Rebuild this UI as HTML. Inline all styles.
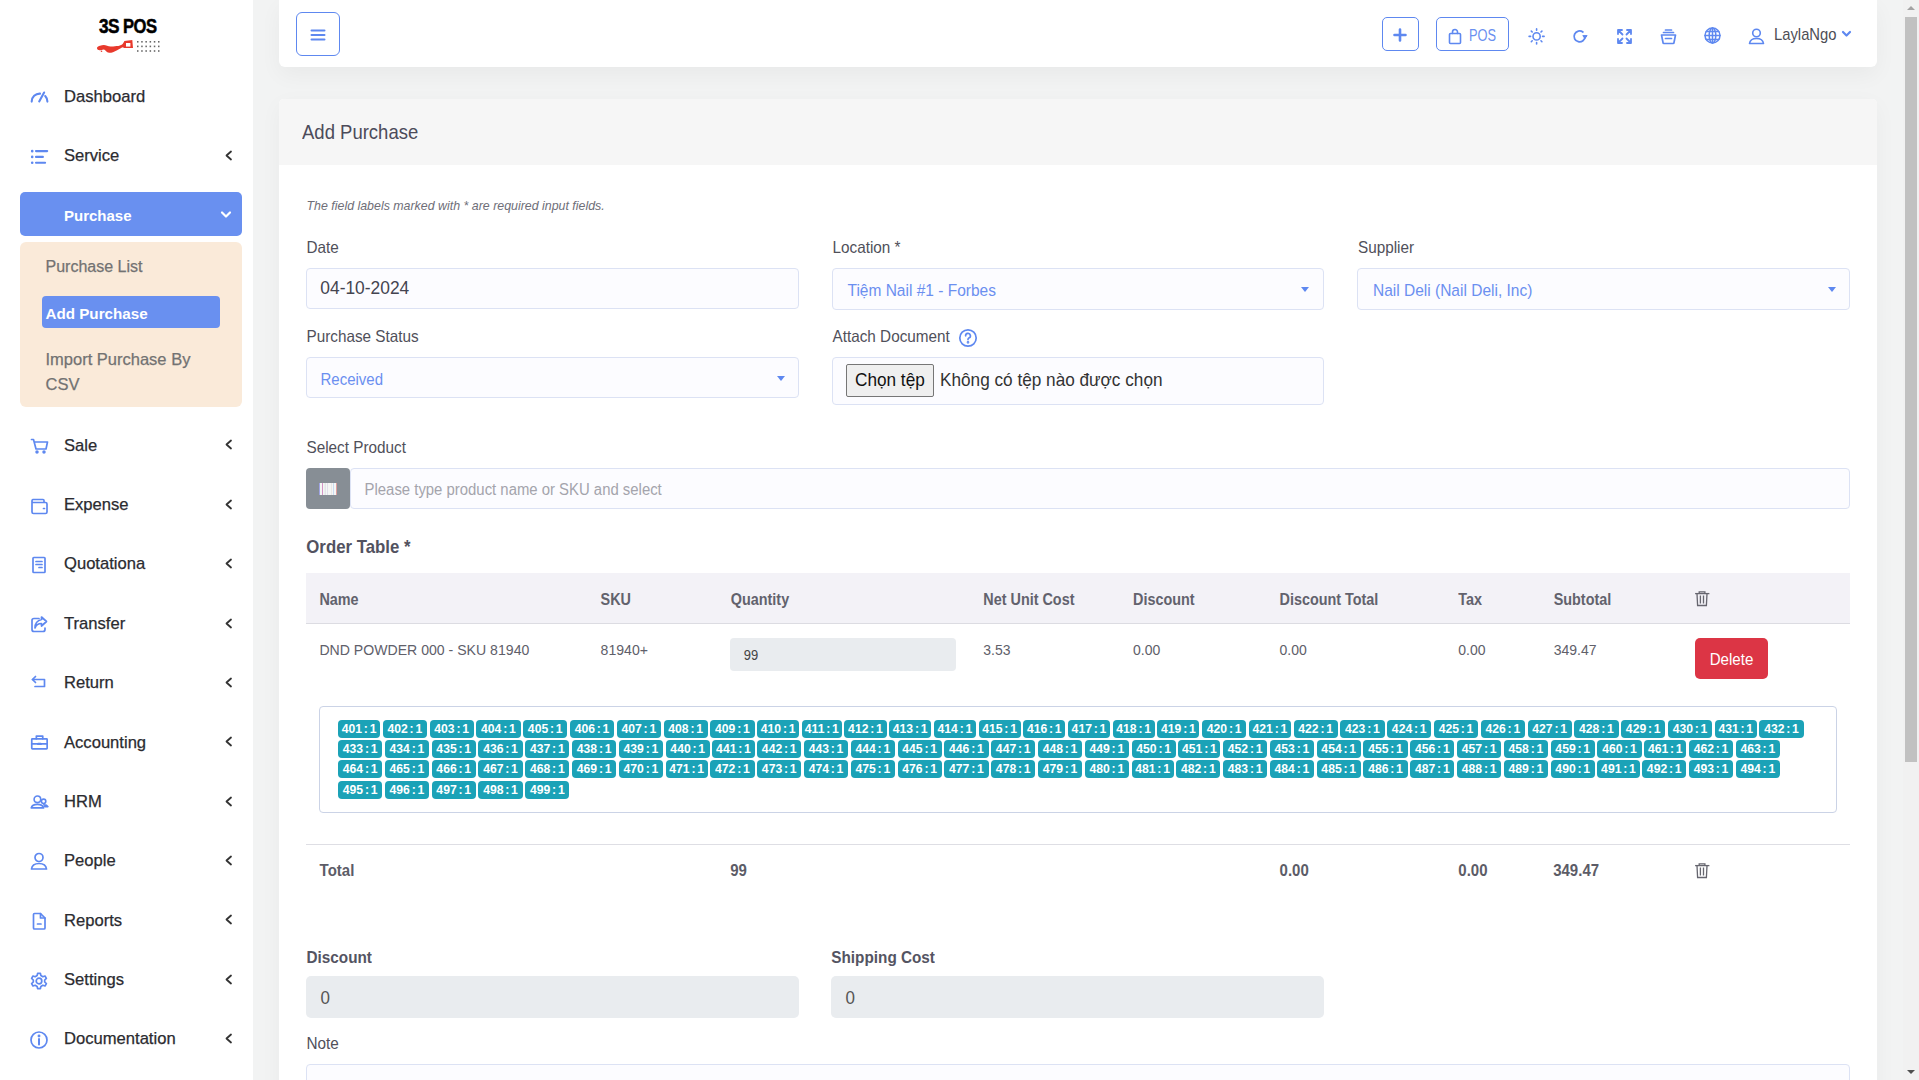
<!DOCTYPE html>
<html><head><meta charset="utf-8">
<style>
*{box-sizing:border-box;margin:0;padding:0}
html,body{width:1919px;height:1080px;overflow:hidden}
body{position:relative;background:#f2f3f3;font-family:"Liberation Sans",sans-serif;color:#333}
.a{position:absolute;white-space:nowrap}
div.sb{-webkit-text-stroke:0.25px currentColor}
.bd span{display:inline-block;transform:scaleY(1.12);transform-origin:0 12px}
.bd{position:absolute;height:17.6px;background:#1ba2b7;color:#fff;font-size:12.2px;font-weight:700;border-radius:4px;text-align:center;line-height:17.6px;padding-top:1.4px;white-space:nowrap;word-spacing:-1.6px}
</style></head><body>
<div class="a" style="left:0px;top:0px;width:253px;height:1080px;background:#fff"></div>
<div class="a sb" style="left:99.4px;top:16.07px;font-size:20px;line-height:20px;font-weight:700;color:#000;font-style:normal;letter-spacing:-0.6px;-webkit-text-stroke:0.5px #000;transform:scaleX(0.86);transform-origin:0 0">3S</div>
<div class="a sb" style="left:123.1px;top:16.07px;font-size:20px;line-height:20px;font-weight:700;color:#000;font-style:normal;letter-spacing:-0.6px;-webkit-text-stroke:0.5px #000;transform:scaleX(0.83);transform-origin:0 0">POS</div>
<svg class="a" style="left:96px;top:39px" width="40" height="15" viewBox="0 0 40 15"><path d="M0.9 9 C1.5 7.5 2.7 6.9 4 6.7 C5.5 6.4 6.5 6.1 7.8 6.1 C10 6.3 12.5 7.8 15 7.6 C18 7.3 20 6.9 22.4 6.9 C24.5 6.6 26 5.5 26.8 4.7 L28.2 2.5 L28.2 2.1 L36.3 1 L37 9 L28 9 C27.5 8.6 27 8.4 26.8 8.3 C25 9 23.5 10 22.4 10.5 C20.5 11.5 19.5 12 18 12.7 C16.5 13.5 15.5 13.8 14.4 13.8 C12.5 13.8 11.5 13.2 10.7 12.7 C9.5 11.8 8.8 10.8 7.8 10.5 C6 10.5 4.5 11.4 3.4 11.3 C2.2 11.2 1.2 10.5 0.9 9 Z" fill="#e8392c"/><circle cx="5.5" cy="12.3" r="0.8" fill="#e8392c"/><rect x="30" y="4" width="4.4" height="3.6" fill="#fff"/></svg>
<svg class="a" style="left:137px;top:41px" width="24" height="13" viewBox="0 0 24 13"><rect x="0.0" y="0.0" width="1.5" height="1.6" fill="#666"/><rect x="0.0" y="4.6" width="1.5" height="1.6" fill="#666"/><rect x="0.0" y="9.2" width="1.5" height="1.6" fill="#666"/><rect x="4.2" y="0.0" width="1.5" height="1.6" fill="#666"/><rect x="4.2" y="4.6" width="1.5" height="1.6" fill="#666"/><rect x="4.2" y="9.2" width="1.5" height="1.6" fill="#666"/><rect x="8.4" y="0.0" width="1.5" height="1.6" fill="#666"/><rect x="8.4" y="4.6" width="1.5" height="1.6" fill="#666"/><rect x="8.4" y="9.2" width="1.5" height="1.6" fill="#666"/><rect x="12.600000000000001" y="0.0" width="1.5" height="1.6" fill="#666"/><rect x="12.600000000000001" y="4.6" width="1.5" height="1.6" fill="#666"/><rect x="12.600000000000001" y="9.2" width="1.5" height="1.6" fill="#666"/><rect x="16.8" y="0.0" width="1.5" height="1.6" fill="#666"/><rect x="16.8" y="4.6" width="1.5" height="1.6" fill="#666"/><rect x="16.8" y="9.2" width="1.5" height="1.6" fill="#666"/><rect x="21.0" y="0.0" width="1.5" height="1.6" fill="#666"/><rect x="21.0" y="4.6" width="1.5" height="1.6" fill="#666"/><rect x="21.0" y="9.2" width="1.5" height="1.6" fill="#666"/></svg>
<div class="a sb" style="left:64px;top:88.95px;font-size:16.6px;line-height:16.6px;font-weight:400;color:#2b2b30;font-style:normal;">Dashboard</div>
<div class="a sb" style="left:64px;top:148.35px;font-size:16.6px;line-height:16.6px;font-weight:400;color:#2b2b30;font-style:normal;">Service</div>
<svg class="a" style="left:223.5px;top:150.0px;" width="9" height="11" viewBox="0 0 9 11" fill="none" stroke="#333" stroke-width="1.8" stroke-linecap="round" stroke-linejoin="round"><path d="M7 1.5 L2.5 5.5 L7 9.5"/></svg>
<div class="a sb" style="left:64px;top:437.75px;font-size:16.6px;line-height:16.6px;font-weight:400;color:#2b2b30;font-style:normal;">Sale</div>
<svg class="a" style="left:223.5px;top:439.4px;" width="9" height="11" viewBox="0 0 9 11" fill="none" stroke="#333" stroke-width="1.8" stroke-linecap="round" stroke-linejoin="round"><path d="M7 1.5 L2.5 5.5 L7 9.5"/></svg>
<div class="a sb" style="left:64px;top:497.25px;font-size:16.6px;line-height:16.6px;font-weight:400;color:#2b2b30;font-style:normal;">Expense</div>
<svg class="a" style="left:223.5px;top:498.9px;" width="9" height="11" viewBox="0 0 9 11" fill="none" stroke="#333" stroke-width="1.8" stroke-linecap="round" stroke-linejoin="round"><path d="M7 1.5 L2.5 5.5 L7 9.5"/></svg>
<div class="a sb" style="left:64px;top:556.45px;font-size:16.6px;line-height:16.6px;font-weight:400;color:#2b2b30;font-style:normal;">Quotationa</div>
<svg class="a" style="left:223.5px;top:558.1px;" width="9" height="11" viewBox="0 0 9 11" fill="none" stroke="#333" stroke-width="1.8" stroke-linecap="round" stroke-linejoin="round"><path d="M7 1.5 L2.5 5.5 L7 9.5"/></svg>
<div class="a sb" style="left:64px;top:616.15px;font-size:16.6px;line-height:16.6px;font-weight:400;color:#2b2b30;font-style:normal;">Transfer</div>
<svg class="a" style="left:223.5px;top:617.8px;" width="9" height="11" viewBox="0 0 9 11" fill="none" stroke="#333" stroke-width="1.8" stroke-linecap="round" stroke-linejoin="round"><path d="M7 1.5 L2.5 5.5 L7 9.5"/></svg>
<div class="a sb" style="left:64px;top:675.05px;font-size:16.6px;line-height:16.6px;font-weight:400;color:#2b2b30;font-style:normal;">Return</div>
<svg class="a" style="left:223.5px;top:676.6999999999999px;" width="9" height="11" viewBox="0 0 9 11" fill="none" stroke="#333" stroke-width="1.8" stroke-linecap="round" stroke-linejoin="round"><path d="M7 1.5 L2.5 5.5 L7 9.5"/></svg>
<div class="a sb" style="left:64px;top:734.75px;font-size:16.6px;line-height:16.6px;font-weight:400;color:#2b2b30;font-style:normal;">Accounting</div>
<svg class="a" style="left:223.5px;top:736.4px;" width="9" height="11" viewBox="0 0 9 11" fill="none" stroke="#333" stroke-width="1.8" stroke-linecap="round" stroke-linejoin="round"><path d="M7 1.5 L2.5 5.5 L7 9.5"/></svg>
<div class="a sb" style="left:64px;top:793.95px;font-size:16.6px;line-height:16.6px;font-weight:400;color:#2b2b30;font-style:normal;">HRM</div>
<svg class="a" style="left:223.5px;top:795.6px;" width="9" height="11" viewBox="0 0 9 11" fill="none" stroke="#333" stroke-width="1.8" stroke-linecap="round" stroke-linejoin="round"><path d="M7 1.5 L2.5 5.5 L7 9.5"/></svg>
<div class="a sb" style="left:64px;top:853.25px;font-size:16.6px;line-height:16.6px;font-weight:400;color:#2b2b30;font-style:normal;">People</div>
<svg class="a" style="left:223.5px;top:854.9px;" width="9" height="11" viewBox="0 0 9 11" fill="none" stroke="#333" stroke-width="1.8" stroke-linecap="round" stroke-linejoin="round"><path d="M7 1.5 L2.5 5.5 L7 9.5"/></svg>
<div class="a sb" style="left:64px;top:912.75px;font-size:16.6px;line-height:16.6px;font-weight:400;color:#2b2b30;font-style:normal;">Reports</div>
<svg class="a" style="left:223.5px;top:914.4px;" width="9" height="11" viewBox="0 0 9 11" fill="none" stroke="#333" stroke-width="1.8" stroke-linecap="round" stroke-linejoin="round"><path d="M7 1.5 L2.5 5.5 L7 9.5"/></svg>
<div class="a sb" style="left:64px;top:971.95px;font-size:16.6px;line-height:16.6px;font-weight:400;color:#2b2b30;font-style:normal;">Settings</div>
<svg class="a" style="left:223.5px;top:973.6px;" width="9" height="11" viewBox="0 0 9 11" fill="none" stroke="#333" stroke-width="1.8" stroke-linecap="round" stroke-linejoin="round"><path d="M7 1.5 L2.5 5.5 L7 9.5"/></svg>
<div class="a sb" style="left:64px;top:1031.05px;font-size:16.6px;line-height:16.6px;font-weight:400;color:#2b2b30;font-style:normal;">Documentation</div>
<svg class="a" style="left:223.5px;top:1032.7px;" width="9" height="11" viewBox="0 0 9 11" fill="none" stroke="#333" stroke-width="1.8" stroke-linecap="round" stroke-linejoin="round"><path d="M7 1.5 L2.5 5.5 L7 9.5"/></svg>
<svg class="a" style="left:29px;top:88px;" width="20" height="20" viewBox="0 0 20 20" fill="none" stroke="#5e88f0" stroke-width="2.1" stroke-linecap="round" stroke-linejoin="round"><path d="M2.7 13.6 A8 8 0 0 1 11 5.6"/><path d="M16.2 8 A8 8 0 0 1 18.4 13.6"/><path d="M10.2 13.4 L15.1 4.5"/></svg>
<svg class="a" style="left:29px;top:146.5px;" width="20" height="20" viewBox="0 0 20 20" fill="none" stroke="#5e88f0" stroke-width="2.1" stroke-linecap="round" stroke-linejoin="round"><path d="M7 4.1 H18.2 M7 9.9 H13.9 M7 15.7 H16.1"/><path d="M3.2 4.1 V4.2 M3.2 9.9 V10 M3.2 15.7 V15.8" stroke-width="2.6"/></svg>
<svg class="a" style="left:29px;top:436px;" width="20" height="20" viewBox="0 0 20 20" fill="none" stroke="#5e88f0" stroke-width="1.7" stroke-linecap="round" stroke-linejoin="round"><path d="M2.5 3.5 H4.5 L7 13 H17 L18.5 6 H5.5"/><circle cx="8" cy="16" r="0.9" fill="#5e88f0"/><circle cx="15" cy="16" r="0.9" fill="#5e88f0"/></svg>
<svg class="a" style="left:29px;top:495.5px;" width="20" height="20" viewBox="0 0 20 20" fill="none" stroke="#5e88f0" stroke-width="1.7" stroke-linecap="round" stroke-linejoin="round"><path d="M15 6.5 V4.5 A1 1 0 0 0 14 3.5 H4 A1.5 1.5 0 0 0 3 5 V16 A1.5 1.5 0 0 0 4.5 17.5 H16.5 A1.5 1.5 0 0 0 18 16 V8 A1.5 1.5 0 0 0 16.5 6.5 H4"/><path d="M14.5 12.5 H15.5"/></svg>
<svg class="a" style="left:29px;top:554.5px;" width="20" height="20" viewBox="0 0 20 20" fill="none" stroke="#5e88f0" stroke-width="1.7" stroke-linecap="round" stroke-linejoin="round"><rect x="4" y="2.5" width="12" height="15" rx="0.8"/><path d="M7 6.5 H13 M7 9.5 H13 M10 12.5 H13"/></svg>
<svg class="a" style="left:29px;top:614px;" width="20" height="20" viewBox="0 0 20 20" fill="none" stroke="#5e88f0" stroke-width="1.7" stroke-linecap="round" stroke-linejoin="round"><path d="M10 4.5 H5 A2 2 0 0 0 3 6.5 V15.5 A2 2 0 0 0 5 17.5 H14 A2 2 0 0 0 16 15.5 V14"/><path d="M12.5 3 L17.5 7.5 L12.5 12 V9.5 C9 9.5 7 11 6 14 C6 10 8 6.5 12.5 5.5 Z"/></svg>
<svg class="a" style="left:29px;top:673px;" width="20" height="20" viewBox="0 0 20 20" fill="none" stroke="#5e88f0" stroke-width="1.7" stroke-linecap="round" stroke-linejoin="round"><path d="M6.5 9.5 L3.5 6.5 L6.5 3.5"/><path d="M3.5 6.5 H15.5 V13.5 H6"/></svg>
<svg class="a" style="left:29px;top:733px;" width="20" height="20" viewBox="0 0 20 20" fill="none" stroke="#5e88f0" stroke-width="1.7" stroke-linecap="round" stroke-linejoin="round"><rect x="2.75" y="5.85" width="15.4" height="10.1" rx="0.6"/><path d="M7.35 5.85 V3.05 H13.75 V5.85"/><path d="M2.75 10.9 H18.15"/><path d="M9.2 10.9 H11.7" stroke-width="2.4"/></svg>
<svg class="a" style="left:29px;top:792.5px;" width="20" height="20" viewBox="0 0 20 20" fill="none" stroke="#5e88f0" stroke-width="1.6" stroke-linecap="round" stroke-linejoin="round"><circle cx="8.4" cy="6.3" r="3.3"/><path d="M2.2 14.9 C2.8 12.6 5.2 11.4 8.4 11.4 C11.6 11.4 14 12.6 14.6 14.9 Z"/><circle cx="14.6" cy="8.3" r="2.2"/><path d="M14.8 11.9 C16.8 12 18.3 12.6 18.9 13.6 H15.6"/></svg>
<svg class="a" style="left:29px;top:851px;" width="20" height="20" viewBox="0 0 20 20" fill="none" stroke="#5e88f0" stroke-width="1.7" stroke-linecap="round" stroke-linejoin="round"><circle cx="10" cy="6.5" r="4"/><path d="M2.5 18 C3 14 6 12.5 10 12.5 C14 12.5 17 14 17.5 18 Z"/></svg>
<svg class="a" style="left:29px;top:910.5px;" width="20" height="20" viewBox="0 0 20 20" fill="none" stroke="#5e88f0" stroke-width="1.7" stroke-linecap="round" stroke-linejoin="round"><path d="M11.5 2.5 H5.5 A1 1 0 0 0 4.5 3.5 V17 A1 1 0 0 0 5.5 18 H15 A1 1 0 0 0 16 17 V7 Z"/><path d="M11.5 2.5 V7 H16"/><path d="M8.5 13 H12"/></svg>
<svg class="a" style="left:29px;top:970.5px;" width="20" height="20" viewBox="0 0 20 20" fill="none" stroke="#5e88f0" stroke-width="1.7" stroke-linecap="round" stroke-linejoin="round"><circle cx="10" cy="10" r="2.8"/><path d="M8.6 2.4 H11.4 L11.9 4.6 L13.8 5.7 L16 5 L17.4 7.4 L15.7 9 V11 L17.4 12.6 L16 15 L13.8 14.3 L11.9 15.4 L11.4 17.6 H8.6 L8.1 15.4 L6.2 14.3 L4 15 L2.6 12.6 L4.3 11 V9 L2.6 7.4 L4 5 L6.2 5.7 L8.1 4.6 Z"/></svg>
<svg class="a" style="left:29px;top:1029.5px;" width="20" height="20" viewBox="0 0 20 20" fill="none" stroke="#5e88f0" stroke-width="1.7" stroke-linecap="round" stroke-linejoin="round"><circle cx="10" cy="10" r="8"/><path d="M10 9 V14.5" stroke-width="2"/><circle cx="10" cy="6" r="0.6" fill="#5e88f0"/></svg>
<div class="a" style="left:20px;top:192px;width:222px;height:44px;background:#6990f0;border-radius:5px"></div>
<div class="a sb" style="left:64px;top:208.10px;font-size:15px;line-height:15px;font-weight:700;color:#fff;font-style:normal;;-webkit-text-stroke:0">Purchase</div>
<svg class="a" style="left:219px;top:209.2px;" width="14" height="12" viewBox="0 0 14 12" fill="none" stroke="#fff" stroke-width="2.2" stroke-linecap="round" stroke-linejoin="round"><path d="M3 3.5 L7 7.5 L11 3.5"/></svg>
<div class="a" style="left:20px;top:242px;width:222px;height:165px;background:#faead9;border-radius:6px"></div>
<div class="a sb" style="left:45.5px;top:259.46px;font-size:16px;line-height:16px;font-weight:400;color:#727272;font-style:normal;">Purchase List</div>
<div class="a" style="left:42px;top:296px;width:178px;height:32px;background:#6990f0;border-radius:4px"></div>
<div class="a sb" style="left:45.5px;top:305.83px;font-size:15.2px;line-height:15.2px;font-weight:700;color:#fff;font-style:normal;;-webkit-text-stroke:0">Add Purchase</div>
<div class="a sb" style="left:45.5px;top:351.13px;font-size:16.5px;line-height:16.5px;font-weight:400;color:#727272;font-style:normal;">Import Purchase By</div>
<div class="a sb" style="left:45.5px;top:375.53px;font-size:16.5px;line-height:16.5px;font-weight:400;color:#727272;font-style:normal;">CSV</div>
<div class="a" style="left:279px;top:0px;width:1598px;height:67px;background:#fff;border-radius:0 0 6px 6px;box-shadow:0 8px 22px rgba(0,0,0,.045)"></div>
<div class="a" style="left:296px;top:12px;width:44px;height:44px;border:1px solid #5e88f0;border-radius:6px"></div>
<svg class="a" style="left:309px;top:27px;" width="18" height="16" viewBox="0 0 18 16" fill="none" stroke="#5e88f0" stroke-width="2" stroke-linecap="round" stroke-linejoin="round"><path d="M2.5 3.5 H15.5 M2.5 8 H15.5 M2.5 12.5 H15.5"/></svg>
<div class="a" style="left:1382px;top:17px;width:37px;height:34px;border:1px solid #5e88f0;border-radius:5px"></div>
<svg class="a" style="left:1392px;top:27px;" width="16" height="16" viewBox="0 0 16 16" fill="none" stroke="#5e88f0" stroke-width="2.6" stroke-linecap="round" stroke-linejoin="round"><path d="M8 2.5 V13.5 M2.5 8 H13.5"/></svg>
<div class="a" style="left:1436px;top:17px;width:73px;height:34px;border:1px solid #5e88f0;border-radius:5px"></div>
<svg class="a" style="left:1447px;top:28px;" width="16" height="17" viewBox="0 0 16 17" fill="none" stroke="#5e88f0" stroke-width="1.6" stroke-linecap="round" stroke-linejoin="round"><rect x="2.5" y="5.5" width="11" height="10" rx="1"/><path d="M5.5 5.5 V4 A2.5 2.5 0 0 1 10.5 4 V5.5"/></svg>
<div class="a" style="left:1469.3px;top:27.76px;font-size:16px;line-height:16px;font-weight:400;color:#6b8ff0;font-style:normal;transform:scaleX(0.8);transform-origin:0 0">POS</div>
<svg class="a" style="left:1527px;top:27px;" width="20" height="20" viewBox="0 0 20 20" fill="none" stroke="#5e88f0" stroke-width="1.6" stroke-linecap="round" stroke-linejoin="round"><circle cx="9.6" cy="9.4" r="3.6"/><path d="M9.6 1.9 V3.3 M9.6 15.5 V16.9 M2.1 9.4 H3.6 M15.6 9.4 H17.1 M4.3 4.1 L5.2 5 M14 13.8 L14.9 14.7 M4.3 14.7 L5.2 13.8 M14 5 L14.9 4.1"/></svg>
<svg class="a" style="left:1571px;top:27px;" width="19" height="19" viewBox="0 0 19 19" fill="none" stroke="#5e88f0" stroke-width="1.8" stroke-linecap="round" stroke-linejoin="round"><path d="M11.9 5 A5.5 5.5 0 1 0 14.1 9.6"/><path d="M12.2 8.6 L16.1 8.6 L14.15 11.3 Z" fill="#5e88f0" stroke-width="1"/></svg>
<svg class="a" style="left:1615px;top:27px;" width="19" height="19" viewBox="0 0 19 19" fill="none" stroke="#5e88f0" stroke-width="1.8" stroke-linecap="round" stroke-linejoin="round"><path d="M3 7 V3 H7 M3 3 L7.5 7.5 M16 7 V3 H12 M16 3 L11.5 7.5 M3 12 V16 H7 M3 16 L7.5 11.5 M16 12 V16 H12 M16 16 L11.5 11.5"/></svg>
<svg class="a" style="left:1659px;top:27px;" width="19" height="19" viewBox="0 0 19 19" fill="none" stroke="#5e88f0" stroke-width="1.7" stroke-linecap="round" stroke-linejoin="round"><path d="M2.5 8 H16.5 L15 15.5 A1 1 0 0 1 14 16.5 H5 A1 1 0 0 1 4 15.5 Z"/><path d="M4.5 5.5 H14.5 M6.5 3 H12.5 M6.5 11.5 H12.5"/></svg>
<svg class="a" style="left:1703px;top:26.2px;" width="19" height="19" viewBox="0 0 19 19" fill="none" stroke="#5e88f0" stroke-width="1.5" stroke-linecap="round" stroke-linejoin="round"><circle cx="9.5" cy="9.5" r="7.5"/><ellipse cx="9.5" cy="9.5" rx="3.3" ry="7.5"/><path d="M2 9.5 H17 M3.2 5.5 H15.8 M3.2 13.5 H15.8 M9.5 2 V17"/></svg>
<svg class="a" style="left:1747px;top:27px;" width="19" height="18" viewBox="0 0 19 18" fill="none" stroke="#5e88f0" stroke-width="1.6" stroke-linecap="round" stroke-linejoin="round"><circle cx="9.5" cy="6" r="3.8"/><path d="M2.5 16.5 C3 13 5.5 11.5 9.5 11.5 C13.5 11.5 16 13 16.5 16.5 Z"/></svg>
<div class="a" style="left:1774px;top:28.27px;font-size:14.8px;line-height:14.8px;font-weight:400;color:#4d4d55;font-style:normal;;transform:scaleY(1.09);transform-origin:0 12.53px">LaylaNgo</div>
<svg class="a" style="left:1840px;top:28px;" width="13" height="12" viewBox="0 0 13 12" fill="none" stroke="#5e88f0" stroke-width="2.2" stroke-linecap="round" stroke-linejoin="round"><path d="M3 4 L6.5 7.5 L10 4"/></svg>
<div class="a" style="left:279px;top:99px;width:1598px;height:1000px;background:#fff;border-radius:5px;box-shadow:0 6px 22px rgba(0,0,0,.04)"></div>
<div class="a" style="left:279px;top:99px;width:1598px;height:66px;background:#f6f6f6;border-radius:5px 5px 0 0"></div>
<div class="a" style="left:302px;top:124.44px;font-size:18.5px;line-height:18.5px;font-weight:400;color:#4c4b5a;font-style:normal;;transform:scaleY(1.09);transform-origin:0 15.66px">Add Purchase</div>
<div class="a" style="left:306.5px;top:199.80px;font-size:12.4px;line-height:12.4px;font-weight:400;color:#6e6e78;font-style:italic;;transform:scaleY(1.09);transform-origin:0 10.50px">The field labels marked with * are required input fields.</div>
<div class="a" style="left:306.5px;top:240.05px;font-size:15.3px;line-height:15.3px;font-weight:400;color:#50505a;font-style:normal;;transform:scaleY(1.09);transform-origin:0 12.95px">Date</div>
<div class="a" style="left:832.5px;top:240.35px;font-size:15.3px;line-height:15.3px;font-weight:400;color:#50505a;font-style:normal;;transform:scaleY(1.09);transform-origin:0 12.95px">Location *</div>
<div class="a" style="left:1358px;top:240.35px;font-size:15.3px;line-height:15.3px;font-weight:400;color:#50505a;font-style:normal;;transform:scaleY(1.09);transform-origin:0 12.95px">Supplier</div>
<div class="a" style="left:306px;top:268px;width:493px;height:41px;background:#fcfcff;border:1px solid #dce2f4;border-radius:4px"></div>
<div class="a" style="left:320.3px;top:280.27px;font-size:17.4px;line-height:17.4px;font-weight:400;color:#444450;font-style:normal;;transform:scaleY(1.09);transform-origin:0 14.73px">04-10-2024</div>
<div class="a" style="left:832px;top:268px;width:492px;height:42px;background:#fcfcff;border:1px solid #dce2f4;border-radius:4px"></div>
<div class="a" style="left:847.5px;top:282.68px;font-size:15.5px;line-height:15.5px;font-weight:400;color:#6b8ff0;font-style:normal;;transform:scaleY(1.09);transform-origin:0 13.12px">Tiệm Nail #1 - Forbes</div>
<div class="a" style="left:1301px;top:287px;width:0;height:0;border-left:4.5px solid transparent;border-right:4.5px solid transparent;border-top:5px solid #5e88f0"></div>
<div class="a" style="left:1357px;top:268px;width:493px;height:42px;background:#fcfcff;border:1px solid #dce2f4;border-radius:4px"></div>
<div class="a" style="left:1373px;top:282.68px;font-size:15.5px;line-height:15.5px;font-weight:400;color:#6b8ff0;font-style:normal;;transform:scaleY(1.09);transform-origin:0 13.12px">Nail Deli (Nail Deli, Inc)</div>
<div class="a" style="left:1828px;top:287px;width:0;height:0;border-left:4.5px solid transparent;border-right:4.5px solid transparent;border-top:5px solid #5e88f0"></div>
<div class="a" style="left:306.5px;top:329.05px;font-size:15.3px;line-height:15.3px;font-weight:400;color:#50505a;font-style:normal;;transform:scaleY(1.09);transform-origin:0 12.95px">Purchase Status</div>
<div class="a" style="left:832.5px;top:328.75px;font-size:15.3px;line-height:15.3px;font-weight:400;color:#50505a;font-style:normal;;transform:scaleY(1.09);transform-origin:0 12.95px">Attach Document</div>
<svg class="a" style="left:958px;top:328px;" width="20" height="20" viewBox="0 0 20 20" fill="none" stroke="#5e88f0" stroke-width="1.7" stroke-linecap="round" stroke-linejoin="round"><circle cx="10" cy="10" r="8.2"/><path d="M7.6 7.8 A2.4 2.4 0 1 1 10.8 10 C10.2 10.3 10 10.8 10 11.6"/><circle cx="10" cy="14.3" r="0.5" fill="#5e88f0"/></svg>
<div class="a" style="left:306px;top:357px;width:493px;height:41px;background:#fcfcff;border:1px solid #dce2f4;border-radius:4px"></div>
<div class="a" style="left:320.5px;top:371.80px;font-size:15px;line-height:15px;font-weight:400;color:#6b8ff0;font-style:normal;;transform:scaleY(1.09);transform-origin:0 12.70px">Received</div>
<div class="a" style="left:777px;top:376px;width:0;height:0;border-left:4.5px solid transparent;border-right:4.5px solid transparent;border-top:5px solid #5e88f0"></div>
<div class="a" style="left:832px;top:357px;width:492px;height:48px;background:#fcfcff;border:1px solid #dce2f4;border-radius:4px"></div>
<div class="a" style="left:846px;top:364px;width:88px;height:33px;background:#efefef;border:1px solid #767676;border-radius:2px"></div>
<div class="a" style="left:855px;top:372.14px;font-size:17.2px;line-height:17.2px;font-weight:400;color:#111;font-style:normal;;transform:scaleY(1.09);transform-origin:0 14.56px">Chọn tệp</div>
<div class="a" style="left:940px;top:372.14px;font-size:17.2px;line-height:17.2px;font-weight:400;color:#333;font-style:normal;;transform:scaleY(1.09);transform-origin:0 14.56px">Không có tệp nào được chọn</div>
<div class="a" style="left:306.5px;top:440.05px;font-size:15.3px;line-height:15.3px;font-weight:400;color:#50505a;font-style:normal;;transform:scaleY(1.09);transform-origin:0 12.95px">Select Product</div>
<div class="a" style="left:306px;top:468px;width:44px;height:41px;background:#878e95;border-radius:4px"></div>
<svg class="a" style="left:319px;top:483px" width="18" height="12" viewBox="0 0 18 12"><rect x="0" y="0" width="18" height="12" fill="#f4f6f4"/><rect x="0" y="0" width="0.8" height="12" fill="#8a90e0"/><rect x="3" y="0" width="0.9" height="12" fill="#d08ac0"/><rect x="5.8" y="0" width="0.6" height="12" fill="#c8d0d8"/><rect x="8" y="0" width="0.5" height="12" fill="#d0c8e0"/><rect x="12.5" y="0" width="0.5" height="12" fill="#e0d8d8"/><rect x="14" y="0" width="0.7" height="12" fill="#b8d0f0"/><rect x="17.2" y="0" width="0.8" height="12" fill="#d88888"/></svg>
<div class="a" style="left:350px;top:468px;width:1500px;height:41px;background:#fcfcff;border:1px solid #dce2f4;border-radius:4px"></div>
<div class="a" style="left:364.6px;top:483.19px;font-size:14.9px;line-height:14.9px;font-weight:400;color:#a4a4ac;font-style:normal;;transform:scaleY(1.09);transform-origin:0 12.61px">Please type product name or SKU and select</div>
<div class="a" style="left:306.3px;top:539.58px;font-size:16.8px;line-height:16.8px;font-weight:700;color:#525260;font-style:normal;;-webkit-text-stroke:0;transform:scaleY(1.09);transform-origin:0 14.22px">Order Table *</div>
<div class="a" style="left:306px;top:573px;width:1544px;height:50px;background:#f3f2f7"></div>
<div class="a" style="left:306px;top:623px;width:1544px;height:1px;background:#dcdce2"></div>
<div class="a" style="left:319.4px;top:592.81px;font-size:14.4px;line-height:14.4px;font-weight:700;color:#62626d;font-style:normal;;-webkit-text-stroke:0;transform:scaleY(1.09);transform-origin:0 12.19px">Name</div>
<div class="a" style="left:600.6px;top:592.81px;font-size:14.4px;line-height:14.4px;font-weight:700;color:#62626d;font-style:normal;;-webkit-text-stroke:0;transform:scaleY(1.09);transform-origin:0 12.19px">SKU</div>
<div class="a" style="left:730.8px;top:592.81px;font-size:14.4px;line-height:14.4px;font-weight:700;color:#62626d;font-style:normal;;-webkit-text-stroke:0;transform:scaleY(1.09);transform-origin:0 12.19px">Quantity</div>
<div class="a" style="left:983.3px;top:592.81px;font-size:14.4px;line-height:14.4px;font-weight:700;color:#62626d;font-style:normal;;-webkit-text-stroke:0;transform:scaleY(1.09);transform-origin:0 12.19px">Net Unit Cost</div>
<div class="a" style="left:1133px;top:592.81px;font-size:14.4px;line-height:14.4px;font-weight:700;color:#62626d;font-style:normal;;-webkit-text-stroke:0;transform:scaleY(1.09);transform-origin:0 12.19px">Discount</div>
<div class="a" style="left:1279.5px;top:592.81px;font-size:14.4px;line-height:14.4px;font-weight:700;color:#62626d;font-style:normal;;-webkit-text-stroke:0;transform:scaleY(1.09);transform-origin:0 12.19px">Discount Total</div>
<div class="a" style="left:1458.3px;top:592.81px;font-size:14.4px;line-height:14.4px;font-weight:700;color:#62626d;font-style:normal;;-webkit-text-stroke:0;transform:scaleY(1.09);transform-origin:0 12.19px">Tax</div>
<div class="a" style="left:1553.7px;top:592.81px;font-size:14.4px;line-height:14.4px;font-weight:700;color:#62626d;font-style:normal;;-webkit-text-stroke:0;transform:scaleY(1.09);transform-origin:0 12.19px">Subtotal</div>
<svg class="a" style="left:1694px;top:590px;" width="16" height="17" viewBox="0 0 16 17" fill="none" stroke="#66666f" stroke-width="1.3" stroke-linecap="butt" stroke-linejoin="miter"><path d="M1.1 3.6 H15.4"/><path d="M5.2 3.6 V1.9 H10.9 V3.6"/><path d="M3 3.6 L3.6 15.5 H12.4 L13 3.6"/><path d="M6.4 5.4 V13.6 M9.5 5.4 V13.6"/></svg>
<div class="a" style="left:319.4px;top:642.96px;font-size:14.1px;line-height:14.1px;font-weight:400;color:#60606a;font-style:normal;;transform:scaleY(1.09);transform-origin:0 11.94px">DND POWDER 000 - SKU 81940</div>
<div class="a" style="left:600.6px;top:642.96px;font-size:14.1px;line-height:14.1px;font-weight:400;color:#60606a;font-style:normal;;transform:scaleY(1.09);transform-origin:0 11.94px">81940+</div>
<div class="a" style="left:730px;top:638px;width:226px;height:33px;background:#e9ecef;border-radius:4px"></div>
<div class="a" style="left:743.8px;top:649.00px;font-size:13px;line-height:13px;font-weight:400;color:#444;font-style:normal;;transform:scaleY(1.09);transform-origin:0 11.00px">99</div>
<div class="a" style="left:983.3px;top:643.15px;font-size:14px;line-height:14px;font-weight:400;color:#60606a;font-style:normal;;transform:scaleY(1.09);transform-origin:0 11.85px">3.53</div>
<div class="a" style="left:1133px;top:643.15px;font-size:14px;line-height:14px;font-weight:400;color:#60606a;font-style:normal;;transform:scaleY(1.09);transform-origin:0 11.85px">0.00</div>
<div class="a" style="left:1279.5px;top:643.15px;font-size:14px;line-height:14px;font-weight:400;color:#60606a;font-style:normal;;transform:scaleY(1.09);transform-origin:0 11.85px">0.00</div>
<div class="a" style="left:1458.3px;top:643.15px;font-size:14px;line-height:14px;font-weight:400;color:#60606a;font-style:normal;;transform:scaleY(1.09);transform-origin:0 11.85px">0.00</div>
<div class="a" style="left:1553.7px;top:643.15px;font-size:14px;line-height:14px;font-weight:400;color:#60606a;font-style:normal;;transform:scaleY(1.09);transform-origin:0 11.85px">349.47</div>
<div class="a" style="left:1695px;top:638px;width:73px;height:41px;background:#dc3545;border-radius:5px"></div>
<div class="a" style="left:1709.7px;top:652.22px;font-size:15.1px;line-height:15.1px;font-weight:400;color:#fff;font-style:normal;;transform:scaleY(1.09);transform-origin:0 12.78px">Delete</div>
<div class="a" style="left:319px;top:706px;width:1518px;height:107px;border:1px solid #cbd3e6;border-radius:4px"></div>
<div class="bd" style="left:338.00px;top:720px;width:42.20px"><span>401 : 1</span></div>
<div class="bd" style="left:382.70px;top:720px;width:44.30px"><span>402 : 1</span></div>
<div class="bd" style="left:429.50px;top:720px;width:44.30px"><span>403 : 1</span></div>
<div class="bd" style="left:476.30px;top:720px;width:44.30px"><span>404 : 1</span></div>
<div class="bd" style="left:523.10px;top:720px;width:44.30px"><span>405 : 1</span></div>
<div class="bd" style="left:569.90px;top:720px;width:44.30px"><span>406 : 1</span></div>
<div class="bd" style="left:616.70px;top:720px;width:44.30px"><span>407 : 1</span></div>
<div class="bd" style="left:663.50px;top:720px;width:44.30px"><span>408 : 1</span></div>
<div class="bd" style="left:710.30px;top:720px;width:44.30px"><span>409 : 1</span></div>
<div class="bd" style="left:757.10px;top:720px;width:42.20px"><span>410 : 1</span></div>
<div class="bd" style="left:801.80px;top:720px;width:40.10px"><span>411 : 1</span></div>
<div class="bd" style="left:844.40px;top:720px;width:42.20px"><span>412 : 1</span></div>
<div class="bd" style="left:889.10px;top:720px;width:42.20px"><span>413 : 1</span></div>
<div class="bd" style="left:933.80px;top:720px;width:42.20px"><span>414 : 1</span></div>
<div class="bd" style="left:978.50px;top:720px;width:42.20px"><span>415 : 1</span></div>
<div class="bd" style="left:1023.20px;top:720px;width:42.20px"><span>416 : 1</span></div>
<div class="bd" style="left:1067.90px;top:720px;width:42.20px"><span>417 : 1</span></div>
<div class="bd" style="left:1112.60px;top:720px;width:42.20px"><span>418 : 1</span></div>
<div class="bd" style="left:1157.30px;top:720px;width:42.20px"><span>419 : 1</span></div>
<div class="bd" style="left:1202.00px;top:720px;width:44.30px"><span>420 : 1</span></div>
<div class="bd" style="left:1248.80px;top:720px;width:42.20px"><span>421 : 1</span></div>
<div class="bd" style="left:1293.50px;top:720px;width:44.30px"><span>422 : 1</span></div>
<div class="bd" style="left:1340.30px;top:720px;width:44.30px"><span>423 : 1</span></div>
<div class="bd" style="left:1387.10px;top:720px;width:44.30px"><span>424 : 1</span></div>
<div class="bd" style="left:1433.90px;top:720px;width:44.30px"><span>425 : 1</span></div>
<div class="bd" style="left:1480.70px;top:720px;width:44.30px"><span>426 : 1</span></div>
<div class="bd" style="left:1527.50px;top:720px;width:44.30px"><span>427 : 1</span></div>
<div class="bd" style="left:1574.30px;top:720px;width:44.30px"><span>428 : 1</span></div>
<div class="bd" style="left:1621.10px;top:720px;width:44.30px"><span>429 : 1</span></div>
<div class="bd" style="left:1667.90px;top:720px;width:44.30px"><span>430 : 1</span></div>
<div class="bd" style="left:1714.70px;top:720px;width:42.20px"><span>431 : 1</span></div>
<div class="bd" style="left:1759.40px;top:720px;width:44.30px"><span>432 : 1</span></div>
<div class="bd" style="left:338.00px;top:740px;width:44.30px"><span>433 : 1</span></div>
<div class="bd" style="left:384.80px;top:740px;width:44.30px"><span>434 : 1</span></div>
<div class="bd" style="left:431.60px;top:740px;width:44.30px"><span>435 : 1</span></div>
<div class="bd" style="left:478.40px;top:740px;width:44.30px"><span>436 : 1</span></div>
<div class="bd" style="left:525.20px;top:740px;width:44.30px"><span>437 : 1</span></div>
<div class="bd" style="left:572.00px;top:740px;width:44.30px"><span>438 : 1</span></div>
<div class="bd" style="left:618.80px;top:740px;width:44.30px"><span>439 : 1</span></div>
<div class="bd" style="left:665.60px;top:740px;width:44.30px"><span>440 : 1</span></div>
<div class="bd" style="left:712.40px;top:740px;width:42.20px"><span>441 : 1</span></div>
<div class="bd" style="left:757.10px;top:740px;width:44.30px"><span>442 : 1</span></div>
<div class="bd" style="left:803.90px;top:740px;width:44.30px"><span>443 : 1</span></div>
<div class="bd" style="left:850.70px;top:740px;width:44.30px"><span>444 : 1</span></div>
<div class="bd" style="left:897.50px;top:740px;width:44.30px"><span>445 : 1</span></div>
<div class="bd" style="left:944.30px;top:740px;width:44.30px"><span>446 : 1</span></div>
<div class="bd" style="left:991.10px;top:740px;width:44.30px"><span>447 : 1</span></div>
<div class="bd" style="left:1037.90px;top:740px;width:44.30px"><span>448 : 1</span></div>
<div class="bd" style="left:1084.70px;top:740px;width:44.30px"><span>449 : 1</span></div>
<div class="bd" style="left:1131.50px;top:740px;width:44.30px"><span>450 : 1</span></div>
<div class="bd" style="left:1178.30px;top:740px;width:42.20px"><span>451 : 1</span></div>
<div class="bd" style="left:1223.00px;top:740px;width:44.30px"><span>452 : 1</span></div>
<div class="bd" style="left:1269.80px;top:740px;width:44.30px"><span>453 : 1</span></div>
<div class="bd" style="left:1316.60px;top:740px;width:44.30px"><span>454 : 1</span></div>
<div class="bd" style="left:1363.40px;top:740px;width:44.30px"><span>455 : 1</span></div>
<div class="bd" style="left:1410.20px;top:740px;width:44.30px"><span>456 : 1</span></div>
<div class="bd" style="left:1457.00px;top:740px;width:44.30px"><span>457 : 1</span></div>
<div class="bd" style="left:1503.80px;top:740px;width:44.30px"><span>458 : 1</span></div>
<div class="bd" style="left:1550.60px;top:740px;width:44.30px"><span>459 : 1</span></div>
<div class="bd" style="left:1597.40px;top:740px;width:44.30px"><span>460 : 1</span></div>
<div class="bd" style="left:1644.20px;top:740px;width:42.20px"><span>461 : 1</span></div>
<div class="bd" style="left:1688.90px;top:740px;width:44.30px"><span>462 : 1</span></div>
<div class="bd" style="left:1735.70px;top:740px;width:44.30px"><span>463 : 1</span></div>
<div class="bd" style="left:338.00px;top:760px;width:44.30px"><span>464 : 1</span></div>
<div class="bd" style="left:384.80px;top:760px;width:44.30px"><span>465 : 1</span></div>
<div class="bd" style="left:431.60px;top:760px;width:44.30px"><span>466 : 1</span></div>
<div class="bd" style="left:478.40px;top:760px;width:44.30px"><span>467 : 1</span></div>
<div class="bd" style="left:525.20px;top:760px;width:44.30px"><span>468 : 1</span></div>
<div class="bd" style="left:572.00px;top:760px;width:44.30px"><span>469 : 1</span></div>
<div class="bd" style="left:618.80px;top:760px;width:44.30px"><span>470 : 1</span></div>
<div class="bd" style="left:665.60px;top:760px;width:42.20px"><span>471 : 1</span></div>
<div class="bd" style="left:710.30px;top:760px;width:44.30px"><span>472 : 1</span></div>
<div class="bd" style="left:757.10px;top:760px;width:44.30px"><span>473 : 1</span></div>
<div class="bd" style="left:803.90px;top:760px;width:44.30px"><span>474 : 1</span></div>
<div class="bd" style="left:850.70px;top:760px;width:44.30px"><span>475 : 1</span></div>
<div class="bd" style="left:897.50px;top:760px;width:44.30px"><span>476 : 1</span></div>
<div class="bd" style="left:944.30px;top:760px;width:44.30px"><span>477 : 1</span></div>
<div class="bd" style="left:991.10px;top:760px;width:44.30px"><span>478 : 1</span></div>
<div class="bd" style="left:1037.90px;top:760px;width:44.30px"><span>479 : 1</span></div>
<div class="bd" style="left:1084.70px;top:760px;width:44.30px"><span>480 : 1</span></div>
<div class="bd" style="left:1131.50px;top:760px;width:42.20px"><span>481 : 1</span></div>
<div class="bd" style="left:1176.20px;top:760px;width:44.30px"><span>482 : 1</span></div>
<div class="bd" style="left:1223.00px;top:760px;width:44.30px"><span>483 : 1</span></div>
<div class="bd" style="left:1269.80px;top:760px;width:44.30px"><span>484 : 1</span></div>
<div class="bd" style="left:1316.60px;top:760px;width:44.30px"><span>485 : 1</span></div>
<div class="bd" style="left:1363.40px;top:760px;width:44.30px"><span>486 : 1</span></div>
<div class="bd" style="left:1410.20px;top:760px;width:44.30px"><span>487 : 1</span></div>
<div class="bd" style="left:1457.00px;top:760px;width:44.30px"><span>488 : 1</span></div>
<div class="bd" style="left:1503.80px;top:760px;width:44.30px"><span>489 : 1</span></div>
<div class="bd" style="left:1550.60px;top:760px;width:44.30px"><span>490 : 1</span></div>
<div class="bd" style="left:1597.40px;top:760px;width:42.20px"><span>491 : 1</span></div>
<div class="bd" style="left:1642.10px;top:760px;width:44.30px"><span>492 : 1</span></div>
<div class="bd" style="left:1688.90px;top:760px;width:44.30px"><span>493 : 1</span></div>
<div class="bd" style="left:1735.70px;top:760px;width:44.30px"><span>494 : 1</span></div>
<div class="bd" style="left:338.00px;top:781px;width:44.30px"><span>495 : 1</span></div>
<div class="bd" style="left:384.80px;top:781px;width:44.30px"><span>496 : 1</span></div>
<div class="bd" style="left:431.60px;top:781px;width:44.30px"><span>497 : 1</span></div>
<div class="bd" style="left:478.40px;top:781px;width:44.30px"><span>498 : 1</span></div>
<div class="bd" style="left:525.20px;top:781px;width:44.30px"><span>499 : 1</span></div>
<div class="a" style="left:306px;top:844px;width:1544px;height:1px;background:#dedee4"></div>
<div class="a" style="left:319.6px;top:862.80px;font-size:15px;line-height:15px;font-weight:700;color:#5c5c67;font-style:normal;;-webkit-text-stroke:0;transform:scaleY(1.09);transform-origin:0 12.70px">Total</div>
<div class="a" style="left:730.2px;top:862.80px;font-size:15px;line-height:15px;font-weight:700;color:#5c5c67;font-style:normal;;-webkit-text-stroke:0;transform:scaleY(1.09);transform-origin:0 12.70px">99</div>
<div class="a" style="left:1279.6px;top:862.80px;font-size:15px;line-height:15px;font-weight:700;color:#5c5c67;font-style:normal;;-webkit-text-stroke:0;transform:scaleY(1.09);transform-origin:0 12.70px">0.00</div>
<div class="a" style="left:1458.3px;top:862.80px;font-size:15px;line-height:15px;font-weight:700;color:#5c5c67;font-style:normal;;-webkit-text-stroke:0;transform:scaleY(1.09);transform-origin:0 12.70px">0.00</div>
<div class="a" style="left:1553.2px;top:862.80px;font-size:15px;line-height:15px;font-weight:700;color:#5c5c67;font-style:normal;;-webkit-text-stroke:0;transform:scaleY(1.09);transform-origin:0 12.70px">349.47</div>
<svg class="a" style="left:1694px;top:861.5px;" width="16" height="17" viewBox="0 0 16 17" fill="none" stroke="#66666f" stroke-width="1.3" stroke-linecap="butt" stroke-linejoin="miter"><path d="M1.1 3.6 H15.4"/><path d="M5.2 3.6 V1.9 H10.9 V3.6"/><path d="M3 3.6 L3.6 15.5 H12.4 L13 3.6"/><path d="M6.4 5.4 V13.6 M9.5 5.4 V13.6"/></svg>
<div class="a" style="left:306.5px;top:949.95px;font-size:15.3px;line-height:15.3px;font-weight:700;color:#545462;font-style:normal;;-webkit-text-stroke:0;transform:scaleY(1.09);transform-origin:0 12.95px">Discount</div>
<div class="a" style="left:831.3px;top:949.95px;font-size:15.3px;line-height:15.3px;font-weight:700;color:#545462;font-style:normal;;-webkit-text-stroke:0;transform:scaleY(1.09);transform-origin:0 12.95px">Shipping Cost</div>
<div class="a" style="left:306px;top:976px;width:493px;height:42px;background:#e9ecef;border-radius:5px"></div>
<div class="a" style="left:320.5px;top:989.81px;font-size:17px;line-height:17px;font-weight:400;color:#555;font-style:normal;;transform:scaleY(1.09);transform-origin:0 14.39px">0</div>
<div class="a" style="left:831px;top:976px;width:493px;height:42px;background:#e9ecef;border-radius:5px"></div>
<div class="a" style="left:845.5px;top:989.81px;font-size:17px;line-height:17px;font-weight:400;color:#555;font-style:normal;;transform:scaleY(1.09);transform-origin:0 14.39px">0</div>
<div class="a" style="left:306.5px;top:1036.35px;font-size:15.3px;line-height:15.3px;font-weight:400;color:#50505a;font-style:normal;;transform:scaleY(1.09);transform-origin:0 12.95px">Note</div>
<div class="a" style="left:306px;top:1064px;width:1544px;height:60px;background:#fcfcff;border:1px solid #dce2f4;border-radius:4px"></div>
<div class="a" style="left:1903px;top:0px;width:16px;height:1080px;background:#f1f1f1"></div>
<div class="a" style="left:1905px;top:17px;width:12px;height:745px;background:#c1c1c1"></div>
<div class="a" style="left:1907px;top:6px;width:0;height:0;border-left:4px solid transparent;border-right:4px solid transparent;border-bottom:4px solid #a3a3a3"></div>
<div class="a" style="left:1907px;top:1070px;width:0;height:0;border-left:4px solid transparent;border-right:4px solid transparent;border-top:4px solid #505050"></div>
</body></html>
